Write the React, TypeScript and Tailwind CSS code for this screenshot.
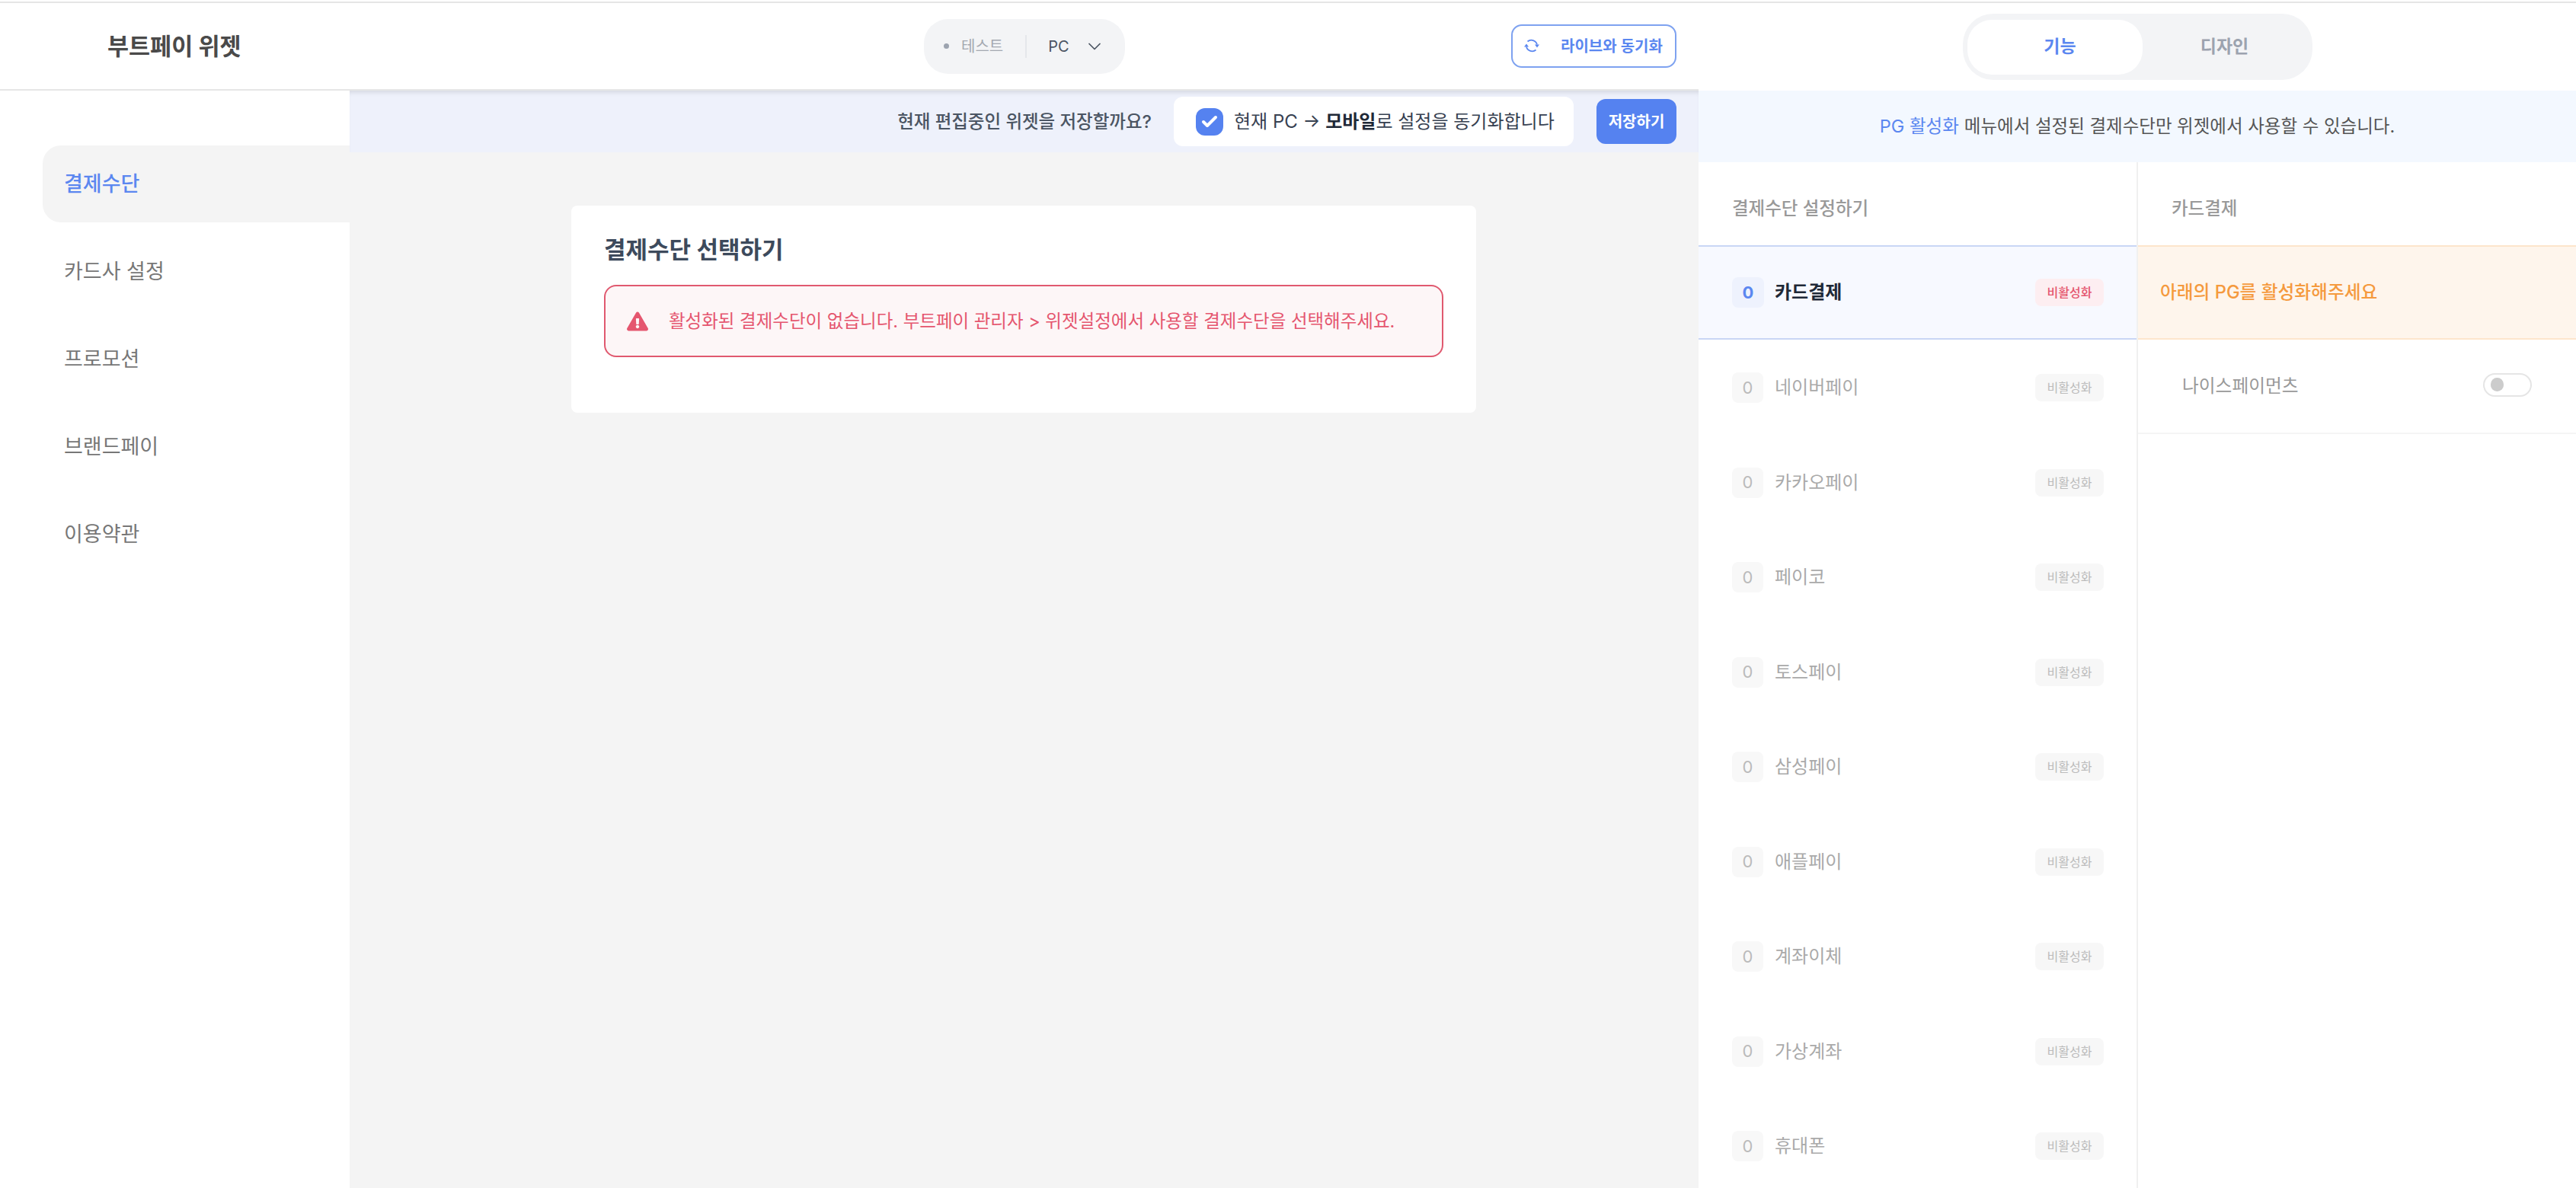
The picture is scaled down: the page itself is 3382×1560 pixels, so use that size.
import React from 'react'
import { Check, ChevronDown } from 'lucide-react'
import { FaExclamationTriangle } from 'react-icons/fa'

const menus = ['결제수단', '카드사 설정', '프로모션', '브랜드페이', '이용약관']
const payments = ['네이버페이', '카카오페이', '페이코', '토스페이', '삼성페이', '애플페이', '계좌이체', '가상계좌', '휴대폰']

const SyncIcon = () => (
    <svg viewBox="0 0 24 24" className="w-[24px] h-[24px] -mt-[2px]" fill="none" stroke="#5b87f0" strokeWidth="1.8">
        <path d="M6.5 6.5A7.8 7.8 0 0 1 19 10.5" />
        <path d="M17.5 17.5A7.8 7.8 0 0 1 5 13.5" />
        <path d="M16 10.5h6l-3 4z" fill="#5b87f0" stroke="none" />
        <path d="M2 13.5h6l-3-4z" fill="#5b87f0" stroke="none" />
    </svg>
)

const App = () => {
    return (
        <div className="w-[3382px] h-[1560px] overflow-hidden bg-white pt-[2px] font-['Inter','Noto_Sans_CJK_KR',sans-serif]">
            <div className="h-[2px] bg-[#e5e5e5]" />
            <div className="flex h-[1556px]">
                {/* left side: editor */}
                <div className="w-[2230px] flex flex-col">
                    <header className="h-[115px] shrink-0 flex items-center border-b-2 border-[#e6e6e6] pr-[29px]">
                        <div className="w-[1213px] pl-[141px] text-[30.5px] font-bold text-[#4a4a4a]">부트페이 위젯</div>
                        <div className="w-[264px] h-[72px] rounded-[32px] bg-[#f3f4f6] flex items-center pl-[26px]">
                            <span className="w-[7px] h-[7px] rounded-full bg-[#9ca3af] mr-[16px]" />
                            <span className="text-[20px] text-[#a3a8b0]">테스트</span>
                            <span className="w-[2px] h-[30px] bg-[#e5e7eb] ml-[29px] mr-[28px]" />
                            <span className="text-[20px] text-[#4b5563]">PC</span>
                            <ChevronDown className="w-[28px] h-[28px] ml-[19px] text-[#4b5563]" strokeWidth={1.5} />
                        </div>
                        <button className="ml-auto w-[217px] h-[57px] rounded-[14px] border-2 border-[#7ea2f0] flex items-center pl-[13px] text-[20px] font-semibold text-[#5b87f0]">
                            <SyncIcon />
                            <span className="ml-[26px]">라이브와 동기화</span>
                        </button>
                    </header>
                    <div className="flex flex-1">
                        <aside className="w-[459px] pt-[72px] pl-[56px] flex flex-col gap-[14px] text-[27px]">
                            {menus.map((m, i) => (
                                <div
                                    key={m}
                                    className={
                                        i === 0
                                            ? 'h-[101px] rounded-l-[24px] bg-[#f4f4f4] pl-[28px] pt-[1px] flex items-center font-medium text-[#5b87f0]'
                                            : 'h-[101px] pl-[28px] pt-[1px] flex items-center text-[#777777]'
                                    }
                                >
                                    {m}
                                </div>
                            ))}
                        </aside>
                        <main className="flex-1 bg-[#f4f4f4]">
                            <div className="h-[81px] bg-[#eef1fb] shadow-[inset_0_6px_6px_-4px_rgba(0,0,0,0.12)] flex items-center justify-end pr-[29px]">
                                <span className="text-[23.5px] font-medium text-[#4b5563]">현재 편집중인 위젯을 저장할까요?</span>
                                <div className="ml-[29px] w-[525px] h-[65px] rounded-[12px] bg-white flex items-center pl-[29px] text-[24px] text-[#374151]">
                                    <span className="w-[36px] h-[36px] rounded-[12px] bg-[#5582f0] flex items-center justify-center mr-[14px]">
                                        <Check className="w-[24px] h-[24px] text-white" strokeWidth={4} />
                                    </span>
                                    <span>
                                        현재 PC → <b className="font-bold text-[#1f2937]">모바일</b>로 설정을 동기화합니다
                                    </span>
                                </div>
                                <button className="ml-[30px] w-[105px] h-[59px] rounded-[12px] bg-[#5582f0] text-[20px] font-semibold text-white">저장하기</button>
                            </div>
                            <div className="mt-[70px] ml-[291px] w-[1188px] h-[272px] rounded-[8px] bg-white px-[43px] pt-[38px]">
                                <h2 className="h-[40px] leading-[40px] text-[31px] font-bold text-[#3d4a5c]">결제수단 선택하기</h2>
                                <div className="mt-[26px] h-[95px] rounded-[16px] border-2 border-[#e0596f] bg-[#fdf6f7] flex items-center pl-[28px] text-[23.5px] text-[#e5566f]">
                                    <FaExclamationTriangle className="w-[28px] h-[26px] mr-[27px]" />
                                    활성화된 결제수단이 없습니다. 부트페이 관리자 &gt; 위젯설정에서 사용할 결제수단을 선택해주세요.
                                </div>
                            </div>
                        </main>
                    </div>
                </div>

                {/* right side: settings */}
                <div className="w-[1152px] flex flex-col">
                    <div className="h-[115px] shrink-0 flex items-center justify-center">
                        <div className="w-[459px] h-[87px] rounded-[40px] bg-[#f3f4f6] flex items-center pl-[6px] text-[23px] font-semibold">
                            <div className="w-[230px] h-[72px] rounded-[32px] bg-white flex items-center justify-center pl-[14px] text-[#5b87f0]">기능</div>
                            <div className="flex-1 flex items-center justify-center pr-[7px] text-[#9ca3af]">디자인</div>
                        </div>
                    </div>
                    <div className="h-[94px] shrink-0 bg-[#f3f8ff] flex items-center justify-center text-[23.5px] text-[#555555]">
                        <span className="text-[#5b87f0] mr-[7px]">PG 활성화</span>
                        메뉴에서 설정된 결제수단만 위젯에서 사용할 수 있습니다.
                    </div>
                    <div className="flex flex-1">
                        <div className="w-[577px] border-r-2 border-[#f0f0f0]">
                            <div className="h-[109px] pt-[13px] flex items-center pl-[44px] text-[23.5px] font-medium text-[#999999]">결제수단 설정하기</div>
                            <div className="h-[124px] bg-[#f7f9ff] border-y-2 border-[#c9d6f5] flex items-center pl-[44px] pr-[43px]">
                                <span className="w-[42px] h-[40px] rounded-[8px] bg-[#eef2fd] flex items-center justify-center text-[22px] font-bold text-[#5b87f0]">0</span>
                                <span className="ml-[14px] text-[24px] font-bold text-[#1f2937]">카드결제</span>
                                <span className="ml-auto w-[90px] h-[36px] rounded-[8px] bg-[#fdeef1] flex items-center justify-center text-[16px] font-medium text-[#e5566f]">비활성화</span>
                            </div>
                            {payments.map((p) => (
                                <div key={p} className="h-[124.5px] pt-[2px] flex items-center pl-[44px] pr-[43px]">
                                    <span className="w-[41px] h-[40px] rounded-[8px] bg-[#f8f8f8] flex items-center justify-center text-[22px] text-[#bbbbbb]">0</span>
                                    <span className="ml-[15px] text-[24px] text-[#aaaaaa]">{p}</span>
                                    <span className="ml-auto w-[90px] h-[36px] rounded-[8px] bg-[#f7f7f7] flex items-center justify-center text-[16px] text-[#bbbbbb]">비활성화</span>
                                </div>
                            ))}
                        </div>
                        <div className="flex-1">
                            <div className="h-[109px] pt-[13px] flex items-center pl-[44px] text-[23.5px] font-medium text-[#999999]">카드결제</div>
                            <div className="h-[124px] bg-[#fef5ec] border-y-2 border-[#fde5cc] flex items-center pl-[29px] text-[23.7px] font-medium text-[#f59a3e]">아래의 PG를 활성화해주세요</div>
                            <div className="h-[124px] border-b-2 border-[#f5f5f5] flex items-center pl-[58px] pr-[58px] text-[23.7px] text-[#999999]">
                                나이스페이먼츠
                                <span className="ml-auto -mt-[4px] w-[64px] h-[31px] rounded-full border-2 border-[#e5e5e5] flex items-center pl-[8px]">
                                    <span className="w-[17px] h-[18px] rounded-full bg-[#cccccc]" />
                                </span>
                            </div>
                        </div>
                    </div>
                </div>
            </div>
        </div>
    )
}

export default App
